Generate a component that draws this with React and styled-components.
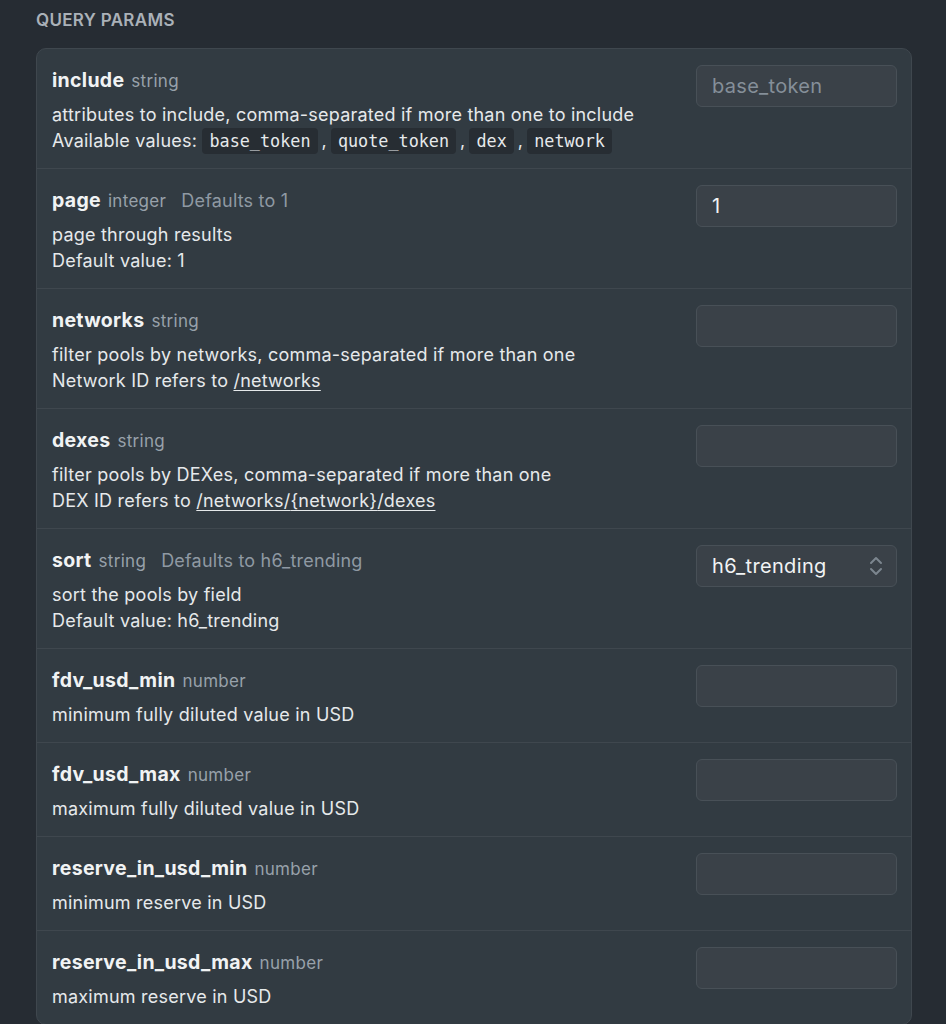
import React from 'react';
import styled, { createGlobalStyle } from 'styled-components';

const GlobalStyle = createGlobalStyle`
  html, body {
    margin: 0;
    padding: 0;
    background: #262c33;
  }
  body {
    font-family: 'Inter', 'Noto Sans', sans-serif;
    -webkit-font-smoothing: antialiased;
  }
`;

const Page = styled.div`
  padding: 8px 34px 40px 36px;
  min-height: 100vh;
  box-sizing: border-box;
`;

const SectionTitle = styled.h2`
  margin: 0 0 16px;
  font-size: 17px;
  line-height: 24px;
  font-weight: 600;
  letter-spacing: 0.3px;
  color: #aab1b8;
  text-transform: uppercase;
`;

const Card = styled.div`
  background: #323b42;
  border: 1px solid #3f474e;
  border-radius: 10px;
  overflow: hidden;
`;

const Row = styled.div`
  display: flex;
  justify-content: space-between;
  align-items: flex-start;
  gap: 24px;
  padding: 15px 14px 14px 15px;
  border-top: ${(p) => (p.$first ? 'none' : '1px solid #3f474e')};
`;

const Info = styled.div`
  display: flex;
  flex-direction: column;
  gap: 8px;
  min-width: 0;
`;

const Heading = styled.div`
  display: flex;
  align-items: baseline;
  height: 30px;
  line-height: 32px;
`;

const Name = styled.span`
  font-size: 19.5px;
  font-weight: 700;
  letter-spacing: 0.3px;
  color: #f1f3f4;
`;

const Type = styled.span`
  margin-left: 7px;
  font-size: 17px;
  letter-spacing: 0.3px;
  color: #98a1aa;
`;

const Default = styled.span`
  margin-left: 15px;
  font-size: 18px;
  letter-spacing: 0.2px;
  color: #8f99a3;
`;

const Description = styled.div`
  font-size: 18px;
  line-height: 26px;
  letter-spacing: 0.22px;
  color: #e6e9eb;
`;

const Code = styled.code`
  display: inline-block;
  font-family: 'DejaVu Sans Mono', 'Liberation Mono', monospace;
  font-size: 16.8px;
  line-height: 26px;
  letter-spacing: 0;
  padding: 0 7px;
  background: #272d33;
  border-radius: 4px;
  color: #e6e9eb;
  margin: 0 4px;

  &:first-child {
    margin-left: 0;
  }
`;

const Link = styled.a`
  color: #e6e9eb;
  text-decoration: underline;
  text-underline-offset: 3px;
`;

const Field = styled.div`
  flex: 0 0 201px;
  margin-top: 1px;
`;

const Input = styled.input`
  box-sizing: border-box;
  width: 201px;
  height: 42px;
  padding: 0 15px;
  background: #3a4148;
  border: 1px solid #485057;
  border-radius: 6px;
  color: #f1f3f4;
  font-family: 'Inter', 'Noto Sans', sans-serif;
  font-size: 20px;
  letter-spacing: 0.3px;
  outline: none;

  &::placeholder {
    color: #858f99;
  }
`;

const Select = styled.div`
  box-sizing: border-box;
  display: flex;
  align-items: center;
  justify-content: space-between;
  width: 201px;
  height: 42px;
  padding: 0 12px 0 15px;
  background: #3a4148;
  border: 1px solid #485057;
  border-radius: 6px;
  color: #f1f3f4;
  font-size: 20px;
  letter-spacing: 0.35px;
`;

const UpDown = () => (
  <svg width="16" height="24" viewBox="0 0 16 24" fill="none" stroke="#7c868f" strokeWidth="2" strokeLinecap="round" strokeLinejoin="round">
    <polyline points="3,9 8,4 13,9" />
    <polyline points="3,15 8,20 13,15" />
  </svg>
);

const params = [
  {
    name: 'include',
    type: 'string',
    placeholder: 'base_token',
    lines: [
      'attributes to include, comma-separated if more than one to include',
      <>
        Available values: <Code>base_token</Code>,<Code>quote_token</Code>,<Code>dex</Code>,<Code>network</Code>
      </>,
    ],
  },
  {
    name: 'page',
    type: 'integer',
    defaults: 'Defaults to 1',
    value: '1',
    lines: ['page through results', 'Default value: 1'],
  },
  {
    name: 'networks',
    type: 'string',
    lines: [
      'filter pools by networks, comma-separated if more than one',
      <>
        Network ID refers to <Link href="#">/networks</Link>
      </>,
    ],
  },
  {
    name: 'dexes',
    type: 'string',
    lines: [
      'filter pools by DEXes, comma-separated if more than one',
      <>
        DEX ID refers to <Link href="#">/networks/{'{network}'}/dexes</Link>
      </>,
    ],
  },
  {
    name: 'sort',
    type: 'string',
    defaults: 'Defaults to h6_trending',
    select: 'h6_trending',
    lines: ['sort the pools by field', 'Default value: h6_trending'],
  },
  { name: 'fdv_usd_min', type: 'number', lines: ['minimum fully diluted value in USD'] },
  { name: 'fdv_usd_max', type: 'number', lines: ['maximum fully diluted value in USD'] },
  { name: 'reserve_in_usd_min', type: 'number', lines: ['minimum reserve in USD'] },
  { name: 'reserve_in_usd_max', type: 'number', lines: ['maximum reserve in USD'] },
];

const App = () => {
  return (
    <Page>
      <GlobalStyle />
      <SectionTitle>Query Params</SectionTitle>
      <Card>
        {params.map((p, i) => (
          <Row key={p.name} $first={i === 0}>
            <Info>
              <Heading>
                <Name>{p.name}</Name>
                <Type>{p.type}</Type>
                {p.defaults && <Default>{p.defaults}</Default>}
              </Heading>
              <Description>
                {p.lines.map((line, j) => (
                  <div key={j}>{line}</div>
                ))}
              </Description>
            </Info>
            <Field>
              {p.select ? (
                <Select>
                  <span>{p.select}</span>
                  <UpDown />
                </Select>
              ) : (
                <Input placeholder={p.placeholder || ''} defaultValue={p.value} />
              )}
            </Field>
          </Row>
        ))}
      </Card>
    </Page>
  );
};

export default App;
